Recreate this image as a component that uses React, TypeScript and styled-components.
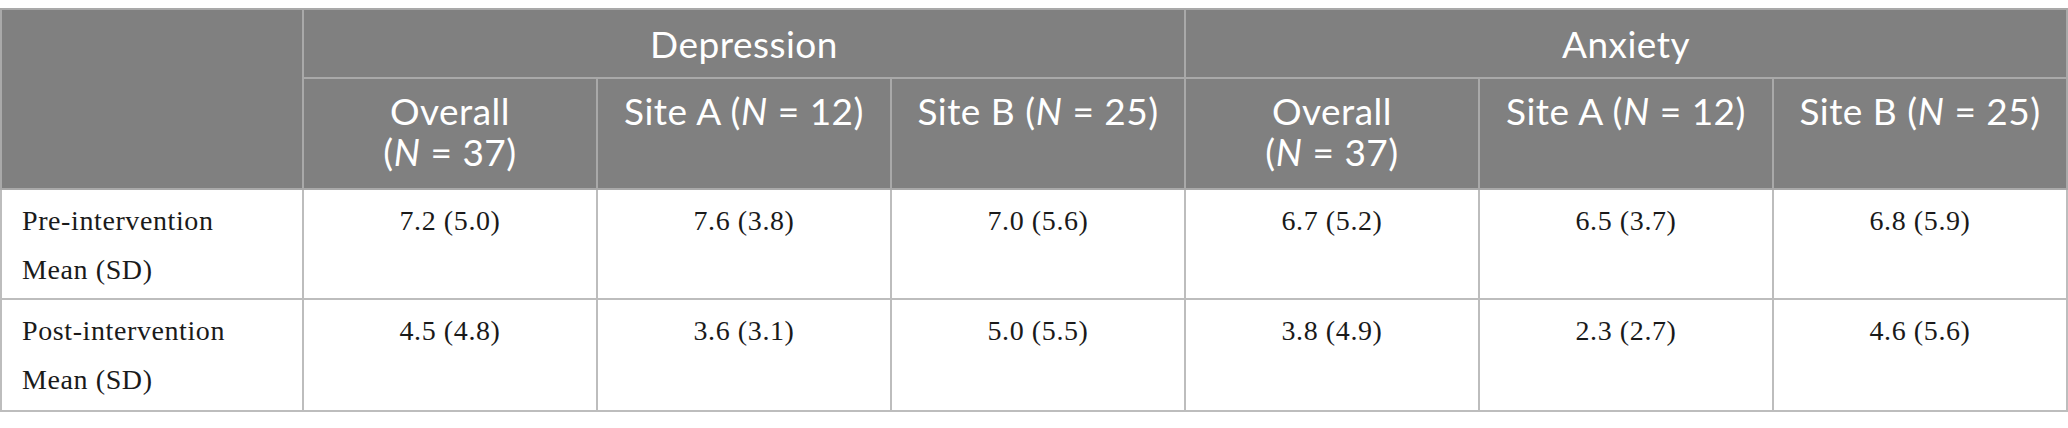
import React from "react";
import styled, { createGlobalStyle } from "styled-components";

const Global = createGlobalStyle`
  html, body { margin: 0; padding: 0; background: #ffffff; }
`;

const Page = styled.div`
  padding-top: 8px;
  width: 2068px;
`;

const Table = styled.table`
  width: 2068px;
  border-collapse: collapse;
  table-layout: fixed;
`;

const Col = styled.col<{ $w: number }>`
  width: ${(p) => p.$w}px;
`;

const HeadCell = styled.th<{ $group?: boolean }>`
  background: #808080;
  color: #ffffff;
  font-family: Lato, "Open Sans", sans-serif;
  font-weight: 400;
  font-size: 37px;
  letter-spacing: 0.5px;
  line-height: 41px;
  text-align: center;
  vertical-align: ${(p) => (p.$group ? "middle" : "top")};
  border: 2px solid #a9a9a9;
  height: ${(p) => (p.$group ? 69 : 111)}px;
  padding: ${(p) => (p.$group ? "0 10px" : "11px 8px 0")};
  box-sizing: border-box;
`;

const BodyCell = styled.td<{ $label?: boolean }>`
  font-family: "Liberation Serif", "Times New Roman", serif;
  font-size: 28px;
  letter-spacing: 0.6px;
  line-height: 49px;
  color: #1a1a1a;
  text-align: ${(p) => (p.$label ? "left" : "center")};
  vertical-align: top;
  padding: ${(p) => (p.$label ? "6px 10px 0 20px" : "6px 10px 0")};
  border: 2px solid #bdbdbd;
`;

const BodyRow = styled.tr<{ $h: number }>`
  height: ${(p) => p.$h}px;
`;

const Ital = styled.i`
  font-style: italic;
`;

const N = ({ n }: { n: number }) => (
  <>
    (<Ital>N</Ital> = {n})
  </>
);

const groups = ["Depression", "Anxiety"];
const widths = [302, 294, 294, 294, 294, 294, 294];

const rows = [
  {
    label: ["Pre-intervention", "Mean (SD)"],
    values: ["7.2 (5.0)", "7.6 (3.8)", "7.0 (5.6)", "6.7 (5.2)", "6.5 (3.7)", "6.8 (5.9)"],
    h: 110,
  },
  {
    label: ["Post-intervention", "Mean (SD)"],
    values: ["4.5 (4.8)", "3.6 (3.1)", "5.0 (5.5)", "3.8 (4.9)", "2.3 (2.7)", "4.6 (5.6)"],
    h: 112,
  },
];

export default function App() {
  return (
    <Page>
      <Global />
      <Table>
        <colgroup>
          {widths.map((w, i) => (
            <Col $w={w} key={i} />
          ))}
        </colgroup>
        <thead>
          <tr>
            <HeadCell $group rowSpan={2} />
            {groups.map((g) => (
              <HeadCell $group key={g} colSpan={3}>
                {g}
              </HeadCell>
            ))}
          </tr>
          <tr>
            {groups.map((g) => (
              <React.Fragment key={g}>
                <HeadCell>
                  Overall
                  <br />
                  <N n={37} />
                </HeadCell>
                <HeadCell>
                  Site A <N n={12} />
                </HeadCell>
                <HeadCell>
                  Site B <N n={25} />
                </HeadCell>
              </React.Fragment>
            ))}
          </tr>
        </thead>
        <tbody>
          {rows.map((r) => (
            <BodyRow $h={r.h} key={r.label[0]}>
              <BodyCell $label>
                {r.label[0]}
                <br />
                {r.label[1]}
              </BodyCell>
              {r.values.map((v, i) => (
                <BodyCell key={i}>{v}</BodyCell>
              ))}
            </BodyRow>
          ))}
        </tbody>
      </Table>
    </Page>
  );
}
